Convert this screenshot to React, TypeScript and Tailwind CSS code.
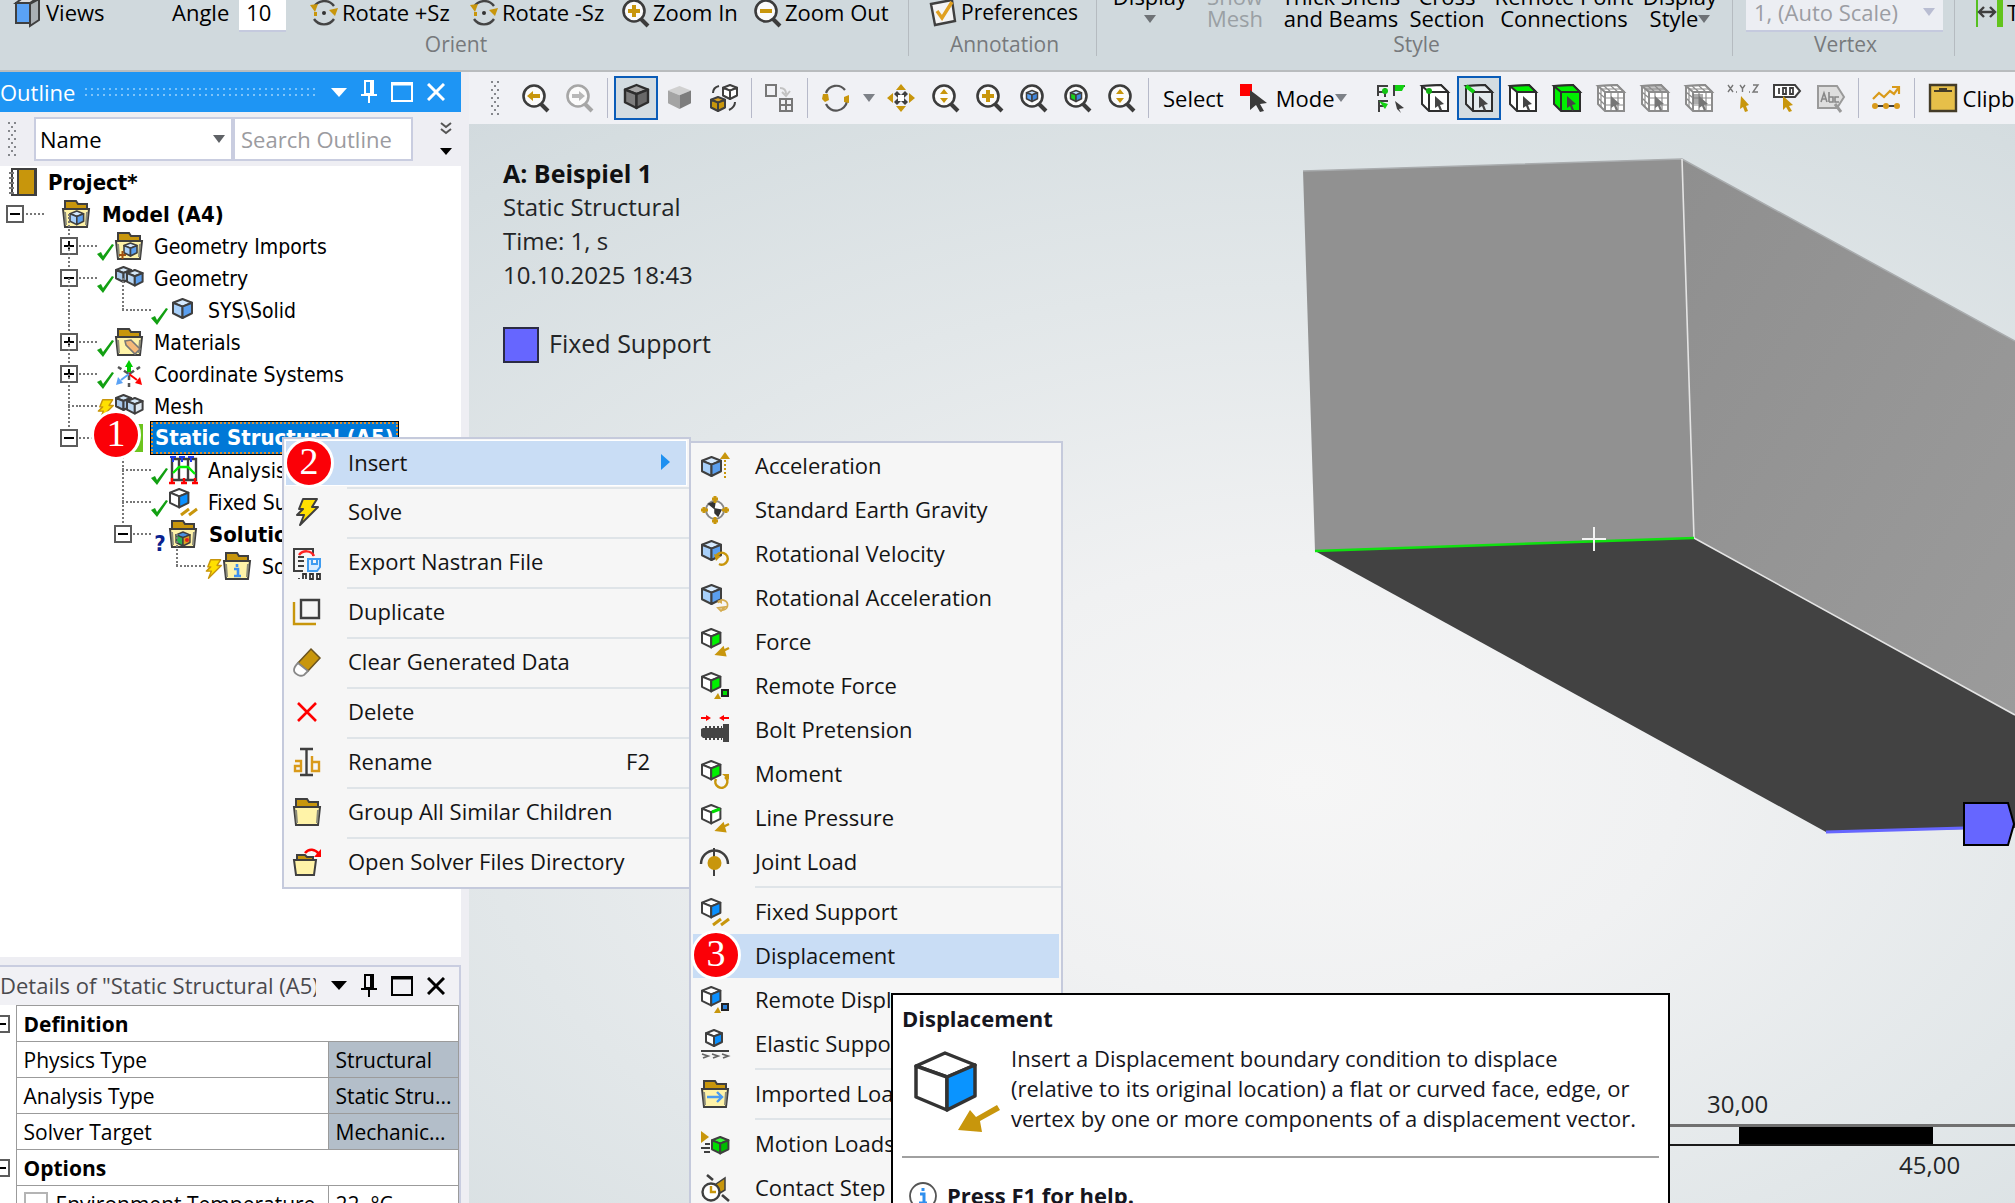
import React from 'react';

const UI = "font-['Open_Sans','Noto_Sans',sans-serif]";
const TREE = "font-['DejaVu_Sans_Condensed','DejaVu_Sans',sans-serif]";
const INK = '#3f3f3f';
const GOLD = '#c8960c';

type Kids = { children?: React.ReactNode };

function Icon({ children, size = 'size-7', box = 28 }: Kids & { size?: string; box?: number }) {
  return (
    <svg aria-hidden="true" viewBox={`0 0 ${box} ${box}`} className={`${size} shrink-0 overflow-visible`} fill="none">
      {children}
    </svg>
  );
}

function Cube({ x = 0, y = 0, s = 1, left = '#fff', right = '#fff', top = '#fff', stroke = INK, w = 2 }: {
  x?: number; y?: number; s?: number; left?: string; right?: string; top?: string; stroke?: string; w?: number;
}) {
  return (
    <g transform={`translate(${x} ${y}) scale(${s})`} stroke={stroke} strokeWidth={w / s} strokeLinejoin="round">
      <path d="M10 0 20 4 10 8 0 4Z" fill={top} />
      <path d="M0 4 10 8V20L0 15Z" fill={left} />
      <path d="M20 4 10 8V20L20 15Z" fill={right} />
    </g>
  );
}

function Folder({ children }: Kids) {
  return (
    <Icon>
      <path d="M3 10V1h11l2 3h9v6" fill="#c8960c" stroke={INK} strokeWidth="2" />
      <path d="M1 9h26l-2 18H3Z" fill="#fff3a8" stroke={INK} strokeWidth="2" />
      <path d="M3 12l1 13M25 12l-1 13" stroke="#8a8a7a" strokeWidth="2" />
      {children}
    </Icon>
  );
}

function Lens({ children, pale = false }: Kids & { pale?: boolean }) {
  const c = pale ? '#a6a6a6' : '#3c3c3c';
  return (
    <Icon>
      <circle cx="13" cy="12" r="10.5" stroke={c} strokeWidth="2.6" fill="#fbfbfb" />
      <path d="M20 20l7 7" stroke={c} strokeWidth="4" />
      {children}
    </Icon>
  );
}

function Bolt({ gold = false }: { gold?: boolean }) {
  return (
    <path d="M10 1h14l-5 8h6L7 27l4-10H4l6-6H6Z" fill="#ffe000" stroke={gold ? '#c8960c' : INK} strokeWidth="2" strokeLinejoin="round" />
  );
}

function Spin() {
  return (
    <Icon>
      <path d="M4 9A11 11 0 0 1 23 6M25 17A11 11 0 0 1 4 20" stroke="#555" strokeWidth="2.2" />
      <path d="M1 10h5l1 6-4 2-3-3ZM27 11l-5 2v5l5 1Z" fill={GOLD} />
    </Icon>
  );
}

const Rotate = () => (
  <Icon>
    <path d="M4 8A12 12 0 0 1 24 7M24 20A12 12 0 0 1 4 20" stroke="#444" strokeWidth="2.4" />
    <path d="M0 6l8-1-3 8ZM28 9l-9 2 6 6ZM4 13h3v4H4Z" fill={GOLD} />
    <circle cx="14" cy="14" r="2" fill="#333" />
  </Icon>
);

const SmallArrow = () => <path d="M28 20 20 24M22 20l-6 6 8 1Z" stroke={GOLD} strokeWidth="2.4" fill={GOLD} />;
const Hatch = () => <path d="M12 27l8-6M20 27l8-6" stroke={GOLD} strokeWidth="3" />;
const UpDown = () => <path d="M13 5l4 5H9ZM13 19l4-5H9Z" fill={GOLD} />;
const Plus = () => <path d="M13 6v12M7 12h12" stroke={GOLD} strokeWidth="4" />;

function Caret({ className = '' }: { className?: string }) {
  return (
    <svg aria-hidden="true" viewBox="0 0 12 8" className={`h-2 w-3 shrink-0 ${className}`}>
      <path d="M0 0h12L6 8Z" fill="currentColor" />
    </svg>
  );
}

/* ------------------------------------------------------------ Ribbon */

function RibbonGroup({ label, children, className = '' }: Kids & { label: string; className?: string }) {
  return (
    <section className={`flex h-14 shrink-0 flex-col justify-end border-r border-[#b5bbc0] ${className}`}>
      <div className="flex items-end">{children}</div>
      <div className="h-6 pl-1 text-center text-[21px] leading-6 text-[#77797c]">{label}</div>
    </section>
  );
}

function RibbonButton({ icon, label, className = '' }: { icon: React.ReactNode; label: string; className?: string }) {
  return (
    <button type="button" className={`flex h-9 items-center gap-1 pb-[3px] whitespace-nowrap ${className}`}>
      {icon}
      {label}
    </button>
  );
}

function Stacked({ top, bottom, className = '', caret = false }: { top: string; bottom?: string; className?: string; caret?: boolean }) {
  return (
    <button type="button" className={`flex shrink-0 flex-col items-center pb-px whitespace-nowrap leading-[22px] ${className}`}>
      <span>{top}</span>
      <span className="flex h-6 items-start">
        {bottom}
        {caret && <Caret className="mt-2 text-[#6e7276]" />}
      </span>
    </button>
  );
}

function Ribbon() {
  return (
    <header className="flex h-[72px] shrink-0 items-start overflow-hidden border-b-2 border-[#b9bcbe] bg-[#d0d9dd] text-[22px] text-black">
      <RibbonGroup label="Orient" className="w-[909px]">
        <RibbonButton
          className="ml-[14px] w-[158px]"
          label="Views"
          icon={
            <Icon>
              <path d="M2 4h14v20H2Z" fill="#5aa2f5" stroke={INK} strokeWidth="2" />
              <path d="M16 5l9-5v21l-9 6Z" fill="#aab0b4" stroke={INK} strokeWidth="2" />
              <path d="M2 4l8-6h15l-9 6Z" fill="#ddd" stroke={INK} strokeWidth="2" />
            </Icon>
          }
        />
        <label className="flex h-9 w-[138px] items-center gap-[10px]">
          <span className="pb-[3px]">Angle</span>
          <input defaultValue="10" className="h-9 w-[47px] border-b-2 border-[#c5cade] bg-white px-[7px] pb-[2px]" />
        </label>
        <RibbonButton className="w-40" label="Rotate +Sz" icon={<Rotate />} />
        <RibbonButton className="w-[151px]" label="Rotate -Sz" icon={<Rotate />} />
        <RibbonButton className="w-[132px]" label="Zoom In" icon={<Lens><Plus /></Lens>} />
        <RibbonButton label="Zoom Out" icon={<Lens><path d="M7 12h12" stroke={GOLD} strokeWidth="4" /></Lens>} />
      </RibbonGroup>
      <RibbonGroup label="Annotation" className="w-[188px]">
        <RibbonButton
          className="ml-[20px] text-[21px]"
          label="Preferences"
          icon={
            <Icon>
              <path d="M2 5l21-4 3 21L6 26Z" fill="#f4f4f4" stroke={INK} strokeWidth="2.4" />
              <path d="M8 12l5 7L23 3" stroke="#e0a020" strokeWidth="3.4" />
            </Icon>
          }
        />
      </RibbonGroup>
      <RibbonGroup label="Style" className="w-[636px]">
        <Stacked top="Display" caret className="ml-[11px] w-[84px]" />
        <Stacked top="Show" bottom="Mesh" className="w-[86px] text-[#9aa0a4]" />
        <Stacked top="Thick Shells" bottom="and Beams" className="w-[126px]" />
        <Stacked top="Cross" bottom="Section" className="w-[86px]" />
        <Stacked top="Remote Point" bottom="Connections" className="w-[148px]" />
        <Stacked top="Display" bottom="Style" caret className="w-[84px]" />
      </RibbonGroup>
      <RibbonGroup label="Vertex" className="w-[222px]">
        <select aria-label="Vertex scale" className="ml-[13px] h-9 w-[197px] appearance-none border-b-2 border-[#c5cade] bg-[#eceef3] pb-[2px] pl-2 text-[#9b9da3]">
          <option>1, (Auto Scale)</option>
        </select>
        <Caret className="mb-4 -ml-5 text-[#b9bdd2]" />
      </RibbonGroup>
      <RibbonButton
        className="-mt-1 ml-5"
        label="Thicken"
        icon={
          <Icon>
            <path d="M2 0v28" stroke="#55c020" strokeWidth="2" />
            <path d="M25 0v28" stroke="#62c41c" strokeWidth="6" />
            <path d="M5 13h14M9 8l-5 5 5 5M15 8l5 5-5 5" stroke={INK} strokeWidth="2.4" />
          </Icon>
        }
      />
    </header>
  );
}

/* ------------------------------------------------------------ Graphics toolbar */

function Tool({ children, active = false, label }: Kids & { active?: boolean; label: string }) {
  return (
    <button
      type="button"
      aria-label={label}
      className={`flex h-11 w-11 shrink-0 items-center justify-center ${active ? 'border-2 border-[#0a5cb8] bg-[#d3dce1]' : ''}`}
    >
      {children}
    </button>
  );
}

const Rule = ({ className = '' }: { className?: string }) => <span className={`h-10 w-px shrink-0 bg-[#b6b9c9] ${className}`} />;

function Grip({ className = '' }: { className?: string }) {
  return (
    <svg aria-hidden="true" viewBox="0 0 8 36" className={`h-9 w-2 shrink-0 ${className}`}>
      {[1, 9, 17, 25, 33].map((y) => (
        <g key={y} fill="#85878c">
          <path d={`M0 ${y}h2v2H0ZM6 ${y}h2v2H6Z`} />
          {y < 33 && <path d={`M3 ${y + 4}h2v2H3Z`} />}
        </g>
      ))}
    </svg>
  );
}

function PickBox({ top = '#fff', body = '#fff', mark, grey = false, mesh = false }: {
  top?: string; body?: string; mark?: React.ReactNode; grey?: boolean; mesh?: boolean;
}) {
  const c = grey ? '#8c8c8c' : '#2e2e2e';
  return (
    <Icon>
      <path d="M1 2 20 1 27 8V27H8L1 20Z" fill={body} stroke={c} strokeWidth="2" />
      <path d="M1 2 20 1 27 8H8Z" fill={top} stroke={c} strokeWidth="2" />
      <path d="M8 8V27" stroke={c} strokeWidth="2" />
      {mesh && <path d="M7 2l7 6v19M14 2l7 6v19M4 5h20M8 14h19M8 21h19M4 5v18M1 8l7 6M1 14l7 7" stroke={c} strokeWidth="1.2" />}
      {mark}
      <path d="M14 12l9 8-4 1 2 5-2 1-2-5-3 2Z" fill={grey ? '#777' : '#444'} />
    </Icon>
  );
}

const LIME = '#00f000';

function GraphicsToolbar() {
  return (
    <div role="toolbar" className="flex h-[52px] shrink-0 items-center overflow-hidden bg-[#f0f1f5] pl-[22px] text-[22px] whitespace-nowrap">
      <Grip className="mr-[14px]" />
      <Tool label="Previous view"><Lens><path d="M6 12l6-5v3h7v4h-7v3Z" fill={GOLD} /></Lens></Tool>
      <Tool label="Next view"><Lens pale><path d="M20 12l-6-5v3H7v4h7v3Z" fill="#b8b8b8" /></Lens></Tool>
      <Rule className="mx-[6px]" />
      <Tool active label="Shaded exterior and edges">
        <Icon><Cube x={3} y={1} s={1.15} left="#7e7e7e" right="#686868" top="#a8a8a8" w={2.4} stroke="#2e2e2e" /></Icon>
      </Tool>
      <Tool label="Shaded exterior">
        <Icon><Cube x={2} y={2} s={1.15} left="#a4a4a4" right="#7d7d7d" top="#d0d0d0" w={0} stroke="none" /></Icon>
      </Tool>
      <Tool label="Swap view">
        <Icon>
          <Cube x={13} y={1} s={0.7} />
          <Cube x={1} y={13} s={0.7} left={GOLD} right={GOLD} top="#d8a020" />
          <path d="M3 9c0-4 2-6 6-7M25 18c0 4-2 6-6 8" stroke={INK} strokeWidth="2" />
        </Icon>
      </Tool>
      <Rule className="mx-[5px]" />
      <Tool label="Viewports">
        <Icon>
          <path d="M1 1h10v11H1Z M15 15h12v12H15Z M21 15v12M15 21h12" stroke="#777" strokeWidth="2" />
          <path d="M15 4c4 0 6 2 6 6M17 8l4 4 4-5" stroke="#c2c2c2" strokeWidth="2" />
        </Icon>
      </Tool>
      <Rule className="mx-[6px]" />
      <Tool label="Rotate"><Spin /></Tool>
      <Caret className="mr-1 ml-[5px] text-[#7d8187]" />
      <Tool label="Pan">
        <Icon>
          <path d="M14 0l5 6H9ZM14 28l5-6H9ZM0 14l6-5v10ZM28 14l-6-5v10Z" fill={GOLD} />
          <path d="M7 10l3-3 4 4 4-4 3 3-4 4 4 4-3 3-4-4-4 4-3-3 4-4Z" fill={INK} />
          <path d="M11 11h6v6h-6Z" fill="#fff" />
        </Icon>
      </Tool>
      <Tool label="Zoom"><Lens><UpDown /></Lens></Tool>
      <Tool label="Box zoom"><Lens><Plus /></Lens></Tool>
      <Tool label="Zoom to fit"><Lens><Cube x={7.5} y={6.5} s={0.55} left="#5aa2f5" right="#3f86dd" top="#bcdcff" w={1.5} /></Lens></Tool>
      <Tool label="Zoom to selection"><Lens><Cube x={7.5} y={6.5} s={0.55} left="#19d219" right="#3f86dd" top="#bcdcff" w={1.5} /></Lens></Tool>
      <Tool label="Look at"><Lens><UpDown /></Lens></Tool>
      <Rule className="mx-[5px]" />
      <span className="ml-[9px]">Select</span>
      <button type="button" className="ml-4 flex items-center gap-2">
        <Icon>
          <path d="M0 0h12v12H0Z" fill="#f00" />
          <path d="M10 6l17 13-7 1 4 7-4 1-4-7-6 5Z" fill="#3a3a3a" />
        </Icon>
        Mode
        <Caret className="-ml-2 text-[#7d8187]" />
      </button>
      <span className="w-[22px] shrink-0" />
      <Tool label="Smart select">
        <Icon>
          <path d="M1 12V2h10M2 28V17h9M17 12V2h11M8 4v9M1 8h6M1 22h6" stroke={INK} strokeWidth="2" />
          <circle cx="8" cy="7" r="3" fill="#12c412" />
          <path d="M18 1h10l-3 6h-7ZM2 17l9 3-3 5Z" fill="#12d012" />
          <path d="M18 17l9 7-5 1 2 4-4-4Z" fill={INK} />
        </Icon>
      </Tool>
      <Tool label="Vertex"><PickBox mark={<circle cx="8" cy="7" r="3" fill="#10b010" />} /></Tool>
      <Tool active label="Edge"><PickBox body="#e4ebee" top="#e4ebee" mark={<path d="M1 2l8 6" stroke="#10d010" strokeWidth="4" />} /></Tool>
      <Tool label="Face"><PickBox top={LIME} /></Tool>
      <Tool label="Body"><PickBox top={LIME} body={LIME} /></Tool>
      <Tool label="Node"><PickBox grey mesh /></Tool>
      <Tool label="Element face"><PickBox grey mesh top="#c4c4c4" /></Tool>
      <Tool label="Element"><PickBox grey mesh mark={<path d="M8 10h10v10H8Z" fill="#777" opacity="0.6" />} /></Tool>
      <Tool label="Coordinates">
        <Icon>
          <path d="M-1 1l5 7M4 1l-5 7M11 1l2.500 3.500L16 1M13.500 4v4M24 1h5l-5 7h5M7 8h1M20 8h1" stroke="#777" strokeWidth="1.4" />
          <path d="M12 12l8 9-3 1 2 5-3 1-2-5-3 2Z" fill={GOLD} />
        </Icon>
      </Tool>
      <Tool label="Tag">
        <Icon>
          <path d="M1 1h21l5 6-5 6H1Z" fill="#fff" stroke={INK} strokeWidth="2" />
          <path d="M6 4v6M10 4h3v6h-3ZM17 4h3v6h-3Z" stroke={INK} strokeWidth="1.8" />
          <path d="M10 12l10 9-4 1 3 5-3 1-3-5-3 3Z" fill={GOLD} />
        </Icon>
      </Tool>
      <Tool label="Label">
        <Icon>
          <path d="M1 2h19l7 11-7 11H1Z" fill="#dedede" stroke="#9a9a9a" strokeWidth="2" />
          <path d="M4 18l3-9 3 9M5 15h4M12 8v10M12 13h4v5h-4M22 13h-4v5h4" stroke="#888" strokeWidth="1.6" />
          <path d="M18 20l6 8" stroke="#999" strokeWidth="3" />
        </Icon>
      </Tool>
      <Rule className="mx-[5px]" />
      <Tool label="Chart">
        <Icon>
          <path d="M1 15l6-6 5 4 6-6 4 3 5-7M20 3h7v7" stroke="#d99a1a" strokeWidth="2.2" />
          <path d="M2 22h24" stroke={INK} strokeWidth="2" />
          <circle cx="3" cy="22" r="3" fill="#d99a1a" />
          <circle cx="14" cy="22" r="3" fill="#d99a1a" />
          <circle cx="25" cy="22" r="3" fill="#d99a1a" />
        </Icon>
      </Tool>
      <Rule className="mx-[6px]" />
      <button type="button" className="ml-2 flex items-center gap-[6px]">
        <Icon>
          <path d="M1 1h26v26H1Z" fill="#e6bf49" stroke="#443c28" strokeWidth="2.400" />
          <path d="M5 7h18M10 5h8" stroke="#443c28" strokeWidth="2" />
        </Icon>
        Clipboard
      </button>
    </div>
  );
}

/* ------------------------------------------------------------ Outline */

function PaneButtons() {
  return (
    <span className="ml-auto flex shrink-0 items-center gap-[14px] pr-4">
      <button type="button" aria-label="Pane menu">
        <svg aria-hidden="true" viewBox="0 0 16 9" className="h-[9px] w-4"><path d="M0 0h16L8 9Z" fill="currentColor" /></svg>
      </button>
      <button type="button" aria-label="Pin">
        <svg aria-hidden="true" viewBox="0 0 16 24" className="h-6 w-4" fill="none" stroke="currentColor" strokeWidth="2"><path d="M4 1h8v13H4ZM0 15h16M8 15v8M10 2v12" /></svg>
      </button>
      <button type="button" aria-label="Maximize">
        <svg aria-hidden="true" viewBox="0 0 22 20" className="h-5 w-[22px]" fill="none" stroke="currentColor"><path d="M1 1h20v18H1Z" strokeWidth="2" /><path d="M0 2h22" strokeWidth="3" /></svg>
      </button>
      <button type="button" aria-label="Close">
        <svg aria-hidden="true" viewBox="0 0 18 18" className="size-[18px]" fill="none" stroke="currentColor" strokeWidth="3"><path d="M1 1l16 16M17 1L1 17" /></svg>
      </button>
    </span>
  );
}

function Expander({ open }: { open: boolean }) {
  return (
    <svg aria-hidden="true" viewBox="0 0 18 18" className="size-[18px] shrink-0" fill="none">
      <path d="M1 1h16v16H1Z" stroke="#5c5c5c" strokeWidth="2" fill="#fff" />
      <path d={open ? 'M4 9h10' : 'M4 9h10M9 4v10'} stroke="#000" strokeWidth="2" />
    </svg>
  );
}

const Check = () => (
  <svg aria-hidden="true" viewBox="0 0 18 18" className="mt-[14px] h-[18px] w-[18px] shrink-0"><path d="M0 10l4-2 2 4L15 0l2 1L6 17Z" fill="#12a012" /></svg>
);
const MiniBolt = () => (
  <svg aria-hidden="true" viewBox="2 0 24 28" className="mt-2 h-[22px] w-[17px] shrink-0"><Bolt gold /></svg>
);
const Query = () => <span className="mt-4 w-[18px] text-center text-[22px] leading-5 font-bold text-[#0a1f8f]">?</span>;

const blueCube = { left: '#a8d0fa', right: '#5b9fee', top: '#d5eaff' };

const GeometryIcon = ({ right = '#5b9fee' }: { right?: string }) => (
  <Icon>
    <Cube x={1} y={3} s={0.75} left="#a8c8ea" right="#a8c8ea" top="#d5e8f8" />
    <Cube x={12} y={6} s={0.78} left="#bcd8f2" right={right} top="#d5e8f8" />
  </Icon>
);

type Row = {
  text: string; level: number; bold?: boolean; open?: boolean; leaf?: boolean; status?: React.ReactNode; icon: React.ReactNode; selected?: boolean;
};

const rows: Row[] = [
  {
    text: 'Project*', level: 0, bold: true, leaf: true,
    icon: (
      <Icon>
        <path d="M4 1h24v26H4Z" fill="#fff" stroke={INK} strokeWidth="2" />
        <path d="M10 1h17v26H10Z" fill="#c8960c" stroke={INK} strokeWidth="2" />
        <path d="M1 5h5M1 10h5M1 15h5M1 20h5M1 25h5" stroke="#777" strokeWidth="2" />
      </Icon>
    ),
  },
  { text: 'Model (A4)', level: 1, bold: true, open: true, icon: <Folder><Cube x={8} y={11} s={0.68} {...blueCube} w={1.6} /></Folder> },
  {
    text: 'Geometry Imports', level: 2, open: false, status: <Check />,
    icon: <Folder><Cube x={9} y={11} s={0.65} {...blueCube} w={1.6} /><path d="M4 23h7M7.500 19v8" stroke="#a05010" strokeWidth="2" /></Folder>,
  },
  { text: 'Geometry', level: 2, open: true, status: <Check />, icon: <GeometryIcon /> },
  { text: 'SYS\\Solid', level: 3, leaf: true, status: <Check />, icon: <Icon><Cube x={4} y={3} s={0.95} {...blueCube} /></Icon> },
  {
    text: 'Materials', level: 2, open: false, status: <Check />,
    icon: <Folder><path d="M10 13l6-1 9 9-5 5-9-9Z" fill="#f5b878" stroke="#777" strokeWidth="1.6" /></Folder>,
  },
  {
    text: 'Coordinate Systems', level: 2, open: false, status: <Check />,
    icon: (
      <Icon>
        <path d="M14 14v13M14 14L3 7M14 14l11-7" stroke="#555" strokeWidth="2.500" strokeDasharray="6 3" />
        <path d="M14 0l4 7h-8Z" fill="#0c0" /><path d="M14 7v5" stroke="#0c0" strokeWidth="4" />
        <path d="M14 14l8 6" stroke="#f00" strokeWidth="2" /><path d="M27 25l-2-8-5 6Z" fill="#f00" />
        <path d="M14 14l-8 6" stroke="#5aa2f5" strokeWidth="2" /><path d="M1 25l2-8 5 6Z" fill="#5aa2f5" />
      </Icon>
    ),
  },
  { text: 'Mesh', level: 2, leaf: true, status: <MiniBolt />, icon: <GeometryIcon right="#dfe9f2" /> },
  {
    text: 'Static Structural (A5)', level: 2, bold: true, open: true, selected: true, status: <Check />,
    icon: <Icon><path d="M0 0h28v28H0Z" fill="#6cc41e" /></Icon>,
  },
  {
    text: 'Analysis Settings', level: 3, leaf: true, status: <Check />,
    icon: (
      <Icon>
        <path d="M3 3h24v21H3ZM10 3v21M19 3v21" stroke={INK} strokeWidth="2.400" />
        <path d="M1 1h6M10 1h6M19 1h6M4 1v5M13 1v5M22 1v5" stroke="#1c3cf0" strokeWidth="2" />
        <path d="M4 17l6-6h9l7 7" stroke="#0e0" strokeWidth="2.400" />
        <path d="M0 27h6M12 27h6M23 27h6M3 22v5M15 22v5M26 22v5" stroke="#f00" strokeWidth="2.400" />
      </Icon>
    ),
  },
  { text: 'Fixed Support', level: 3, leaf: true, status: <Check />, icon: <Icon><Cube x={1} y={1} s={0.92} right="#0a90ff" /><Hatch /></Icon> },
  {
    text: 'Solution (A6)', level: 3, bold: true, open: true, status: <Query />,
    icon: <Folder><Cube x={7} y={12} s={0.7} left="#30b050" right="#e0a020" top="#4a90e0" w={1.4} /><circle cx="18" cy="20" r="2" fill="#e02020" /></Folder>,
  },
  {
    text: 'Solution Information', level: 4, leaf: true, status: <MiniBolt />,
    icon: <Folder><path d="M14 12v3M11 17h4v7M11 24h7" stroke="#3f90f0" strokeWidth="2.600" /></Folder>,
  },
];

const indent = ['pl-2', 'pl-[6px]', 'pl-[60px]', 'pl-[114px]', 'pl-[168px]'];
const vline = ['', 'left-[14px]', 'left-[68px]', 'left-[122px]', 'left-[176px]'];

function OutlineTree() {
  return (
    <ul role="tree" className={`h-[791px] overflow-hidden bg-white text-[21px] text-black ${TREE}`}>
      {rows.map((r, i) => (
        <li
          key={r.text}
          role="treeitem"
          aria-selected={!!r.selected}
          className={`relative flex h-8 items-center whitespace-nowrap ${indent[r.level]}`}
        >
          {r.level > 1 && (
            <span className={`absolute top-[-16px] h-8 border-l-2 border-dotted border-[#777] ${vline[r.level]}`} />
          )}
          {i === 5 && <span className="absolute top-[-48px] left-[68px] h-12 border-l-2 border-dotted border-[#777]" />}
          {r.level > 0 && (r.leaf
            ? <span className="ml-2 w-[10px] border-t-2 border-dotted border-[#777]" />
            : <span className="relative"><Expander open={!!r.open} /></span>)}
          {r.level > 0 && <span className={`border-t-2 border-dotted border-[#777] ${r.level === 1 ? 'mr-[18px] ml-[2px] w-[18px]' : 'ml-px w-[18px]'}`} />}
          {r.status && <span className="flex h-8 w-[18px] items-start">{r.status}</span>}
          {r.icon}
          <span
            className={
              r.selected
                ? 'ml-2 border-2 border-dotted border-[#e09030] bg-[#0078d7] px-[2px] text-[22px] leading-7 font-bold text-white outline-1 outline-black'
                : r.bold
                  ? 'ml-3 text-[22px] font-bold'
                  : 'ml-[11px] pt-[3px]'
            }
          >
            {r.text}
          </span>
        </li>
      ))}
    </ul>
  );
}

function OutlinePane() {
  return (
    <section aria-label="Outline">
      <h2 className="flex h-10 items-center bg-[#1e95f4] text-[22px] text-white">
        Outline
        <span className="ml-2 h-3 w-[234px] bg-[radial-gradient(#7cc3f9_1px,transparent_1px)] bg-[size:6px_6px]" />
        <PaneButtons />
      </h2>
      <div className="flex h-[54px] items-center bg-[#eeeef3] pl-2 text-[22px]">
        <Grip className="mr-[18px]" />
        <span className="relative">
          <select aria-label="Filter by" className="h-11 w-[199px] appearance-none border-2 border-[#c9cde0] bg-white pl-1 text-black">
            <option>Name</option>
          </select>
          <Caret className="absolute top-[18px] right-2 text-[#5f6266]" />
        </span>
        <input aria-label="Search Outline" placeholder="Search Outline" className="h-11 w-[180px] border-2 border-[#c9cde0] bg-white pl-[6px] placeholder:text-[#9b9ba0]" />
        <button type="button" aria-label="More" className="ml-[26px] text-black">
          <svg aria-hidden="true" viewBox="0 0 14 34" className="h-[34px] w-[14px]" fill="none">
            <path d="M2 1l5 4 5-4M2 7l5 4 5-4" stroke="#555" strokeWidth="2" />
            <path d="M1 26h12L7 33Z" fill="#000" />
          </svg>
        </button>
      </div>
      <OutlineTree />
    </section>
  );
}

/* ------------------------------------------------------------ Details */

function GroupRow({ title }: { title: string }) {
  return (
    <tr className="h-9">
      <td className="w-4 align-middle"><span className="-ml-2 block"><Expander open /></span></td>
      <th colSpan={2} className="border border-[#9b9b9b] bg-white px-[7px] text-left font-bold">{title}</th>
    </tr>
  );
}

function ValueRow({ name, value }: { name: string; value: string }) {
  return (
    <tr className="h-9">
      <td className="w-4" />
      <td className="w-[312px] border border-[#9b9b9b] bg-white px-[7px]">{name}</td>
      <td className="border border-[#9b9b9b] bg-[#b3bec9] px-[7px]">{value}</td>
    </tr>
  );
}

function DetailsPane() {
  return (
    <section aria-label="Details" className="mt-2 h-[300px] border-t-2 border-r-2 border-[#c9cde0] bg-[#f1f1f5]">
      <h2 className="flex h-[38px] items-center pb-px text-[22px] text-[#4a4a4e]">
        <span className="w-[316px] overflow-hidden whitespace-nowrap">Details of &quot;Static Structural (A5)&quot;</span>
        <span className="-mr-[2px] ml-auto flex text-black"><PaneButtons /></span>
      </h2>
      <table className="w-full table-fixed border-collapse bg-white text-[21px] leading-8 whitespace-nowrap text-black">
        <colgroup><col className="w-4" /><col className="w-[312px]" /><col /></colgroup>
        <tbody>
          <GroupRow title="Definition" />
          <ValueRow name="Physics Type" value="Structural" />
          <ValueRow name="Analysis Type" value="Static Stru..." />
          <ValueRow name="Solver Target" value="Mechanic..." />
          <GroupRow title="Options" />
          <tr className="h-9">
            <td />
            <td className="border border-[#9b9b9b] px-[7px]">
              <label className="flex items-center gap-2">
                <input type="checkbox" className="size-6 appearance-none border-2 border-[#b4b4b4] bg-white" />
                Environment Temperature
              </label>
            </td>
            <td className="border border-[#9b9b9b] px-[7px]">22, °C</td>
          </tr>
        </tbody>
      </table>
    </section>
  );
}

/* ------------------------------------------------------------ Viewport */

function Viewport() {
  return (
    <main className="relative flex-1 overflow-hidden bg-[#cfd7dc] bg-[radial-gradient(ellipse_1500px_900px_at_54%_61%,#f6f6f6_0%,#f0f1f2_25%,#e2e7e9_55%,#d5dde0_85%,#cfd7dc_100%)]">
      <svg aria-hidden="true" viewBox="0 0 1546 1079" preserveAspectRatio="xMidYMin slice" className="absolute inset-0 size-full" fill="none">
        <defs>
          <linearGradient id="side" x1="0" y1="0" x2="1" y2="1">
            <stop offset="0" stopColor="#8f8f8f" />
            <stop offset="1" stopColor="#9b9b9b" />
          </linearGradient>
        </defs>
        <path d="M834 47 1213 35 1225 414 846 427Z" fill="#919191" />
        <path d="M1213 35 1546 217V591L1225 414Z" fill="url(#side)" />
        <path d="M846 427 1225 414 1546 591V704L1357 708Z" fill="#424242" />
        <path d="M834 47 1213 35 1546 217" stroke="#a9acae" strokeWidth="1.500" />
        <path d="M1213 35 1225 414 1546 591" stroke="#e4e4e4" strokeWidth="1.600" />
        <path d="M846 427 1225 414" stroke="#10e010" strokeWidth="2.500" />
        <path d="M1357 708 1495 704" stroke="#6666ff" strokeWidth="3" />
        <path d="M1495 679h44l6 21-6 21h-44Z" fill="#6666ff" stroke="#000" strokeWidth="2" />
        <path d="M1125 403v24M1113 415h24" stroke="#f2f2f2" strokeWidth="2" />
      </svg>
      <div className="relative px-[34px] pt-8 text-[24px] leading-[34px] text-[#232527]">
        <h1 className="text-[25px] leading-[34px] font-bold text-[#101112]">A: Beispiel 1</h1>
        <p>Static Structural</p>
        <p>Time: 1, s</p>
        <p>10.10.2025 18:43</p>
        <p className="mt-[34px] flex items-center gap-[10px] text-[25px]">
          <span className="size-9 border-2 border-[#2b2b44] bg-[#6666ff]" />
          <span className="pb-[3px]">Fixed Support</span>
        </p>
      </div>
      <div className="absolute inset-x-0 bottom-[22px] text-[24px] leading-8 text-[#232527]">
        <p className="ml-[1238px]">30,00</p>
        <div className="mt-1 ml-[440px] h-[22px] border-t-3 border-b-2 border-t-[#707070] border-b-[#1a1a1a]">
          <div className="ml-[830px] h-full w-[194px] bg-black" />
        </div>
        <p className="mt-[3px] ml-[1430px]">45,00</p>
      </div>
    </main>
  );
}

/* ------------------------------------------------------------ Menus */

const menuIcons: Record<string, React.ReactNode> = {
  Solve: <Icon><Bolt /></Icon>,
  Export: (
    <Icon>
      <path d="M20 8V1H1v22h9M5 9h6M5 13h6M5 18h6" stroke={INK} strokeWidth="2" />
      <path d="M6 7c4-5 12-5 15 1" stroke="#f22" strokeWidth="2.500" />
      <path d="M15 11h12v8l-3 4h-9Z M19 11v5h5v-5" fill="#d8ecff" stroke="#3f9cf0" strokeWidth="2" />
      <path d="M6 30v1M10 31v-5h3v5M17 26h3v5h-3ZM24 26h3v5h-3Z" stroke="#333" strokeWidth="1.800" />
    </Icon>
  ),
  Duplicate: <Icon><path d="M1 4v22h22" stroke={GOLD} strokeWidth="2.400" /><path d="M8 2h18v18H8Z" stroke={INK} strokeWidth="2.400" /></Icon>,
  Clear: (
    <Icon>
      <path d="M18 1l9 9-12 13-10-8Z" fill={GOLD} stroke="#6b5420" strokeWidth="1.500" />
      <path d="M5 15l10 8-4 4c-2 1-4 1-6 0s-4-3-4-5 1-4 4-7Z" fill="#fff" stroke="#888" strokeWidth="1.800" />
    </Icon>
  ),
  Delete: <Icon><path d="M5 5l18 18M23 5L5 23" stroke="#f00" strokeWidth="2.600" /></Icon>,
  Rename: (
    <Icon>
      <path d="M7 1h13M7 27h13M13.500 1v26" stroke={INK} strokeWidth="2.400" />
      <path d="M2 13h6v10H2v-5h6M19 8v15h7v-9h-7" stroke="#d99a1a" strokeWidth="2.400" />
    </Icon>
  ),
  Group: <Folder />,
  Open: (
    <Icon>
      <path d="M4 12V7h8l2 2h6v3" fill={GOLD} stroke={INK} strokeWidth="2" />
      <path d="M1 12h22l-2 15H3Z" fill="#fff3a8" stroke={INK} strokeWidth="2" />
      <path d="M12 5c4-5 10-4 14 1" stroke="#f00" strokeWidth="2.600" /><path d="M28 1v8h-7Z" fill="#f00" />
    </Icon>
  ),
};

const contextItems: [string, string, string?][] = [
  ['Solve', 'Solve'],
  ['Export', 'Export Nastran File'],
  ['Duplicate', 'Duplicate'],
  ['Clear', 'Clear Generated Data'],
  ['Delete', 'Delete'],
  ['Rename', 'Rename', 'F2'],
  ['Group', 'Group All Similar Children'],
  ['Open', 'Open Solver Files Directory'],
];

function ContextMenu() {
  return (
    <div role="menu" className="absolute top-[437px] left-[282px] w-[409px] border-2 border-[#c5cadc] bg-[#f6f6f6] text-[22px] text-[#141414]">
      <button type="button" role="menuitem" className="m-px flex h-[46px] w-[402px] items-center border border-white bg-[#c9ddf5] pr-4 pb-[2px] pl-[62px]">
        Insert
        <svg aria-hidden="true" viewBox="0 0 9 16" className="ml-auto h-4 w-[9px]"><path d="M0 0l9 8-9 8Z" fill="#1e90f0" /></svg>
      </button>
      {contextItems.map(([key, label, hint]) => (
        <div key={key}>
          <div className="ml-[63px] h-[2px] bg-[#dfe4e8]" />
          <button type="button" role="menuitem" className="flex h-12 w-full items-center pr-[39px] pb-[3px] pl-[9px]">
            {menuIcons[key]}
            <span className="ml-[27px]">{label}</span>
            {hint && <span className="ml-auto">{hint}</span>}
          </button>
        </div>
      ))}
    </div>
  );
}

const greenCube = <Cube x={1} y={1} s={0.92} right={LIME} />;
const whiteBlue = <Cube x={1} y={1} s={0.92} right="#0a90ff" />;

const insertItems: [string, React.ReactNode, boolean?][] = [
  ['Acceleration', <Icon><Cube x={1} y={5} s={0.95} {...blueCube} /><path d="M24 8v20" stroke={GOLD} strokeWidth="2" strokeDasharray="2 2" /><path d="M24 0l5 7H19Z" fill={GOLD} /></Icon>],
  ['Standard Earth Gravity', <Icon><circle cx="14" cy="14" r="9" fill="#fff" stroke="#888" strokeWidth="2" /><path d="M8 8l6-2-1 6ZM14 13l6 1-3 6-3-3Z" fill="#333" stroke="#333" strokeWidth="1.500" /><path d="M14 0v7M14 21v7M0 14h7M21 14h7M11 3h6M11 25h6M3 11v6M25 11v6" stroke={GOLD} strokeWidth="3" /></Icon>],
  ['Rotational Velocity', <Icon><Cube x={1} y={1} s={0.95} {...blueCube} /><path d="M15 17a6 6 0 1 1 3 7" stroke={GOLD} strokeWidth="2.400" /><path d="M13 14l7 2-5 5Z" fill={GOLD} /></Icon>],
  ['Rotational Acceleration', <Icon><Cube x={1} y={1} s={0.95} {...blueCube} /><path d="M17 19a5 5 0 1 1 4 7M17 24l7-1-4 4Z" stroke="#d4ac50" strokeWidth="1.800" /><path d="M16 17l5-2v5Z" fill="#d4ac50" /></Icon>],
  ['Force', <Icon>{greenCube}<SmallArrow /></Icon>],
  ['Remote Force', <Icon>{greenCube}<path d="M21 18h6v6h-6Z" fill="#0d0" stroke="#222" strokeWidth="2" /><path d="M13 27l4-6 3 6Z" fill={GOLD} /></Icon>],
  ['Bolt Pretension', <Icon><path d="M0 2h8M28 2h-8" stroke="#f00" strokeWidth="2" /><path d="M10 2l-5-3v6ZM18 2l5-3v6Z" fill="#f00" /><path d="M0 13l2-1h20V8h6v18h-6v-4H2l-2-2Z" fill="#444" /><path d="M4 11h17M4 23h17" stroke="#444" strokeWidth="2" strokeDasharray="2 2" /></Icon>],
  ['Moment', <Icon>{greenCube}<path d="M15 19a6 6 0 1 0 9-2" stroke={GOLD} strokeWidth="2.600" /><path d="M21 14h7v6Z" fill={GOLD} /></Icon>],
  ['Line Pressure', <Icon><Cube x={1} y={1} s={0.92} /><path d="M11 8l8-3" stroke="#0d0" strokeWidth="3" /><SmallArrow /></Icon>],
  ['Joint Load', <Icon><path d="M13 0v28" stroke={INK} strokeWidth="2" /><path d="M0 16a13 13 0 0 1 27 0" stroke={INK} strokeWidth="2.400" /><circle cx="13.500" cy="15" r="7" fill={GOLD} /></Icon>],
  ['Fixed Support', <Icon>{whiteBlue}<Hatch /></Icon>, true],
  ['Displacement', <Icon>{whiteBlue}<SmallArrow /></Icon>],
  ['Remote Displacement', <Icon>{whiteBlue}<path d="M21 18h6v6h-6Z" fill="#2a7fd8" stroke="#222" strokeWidth="2" /><path d="M13 27l4-6 3 6Z" fill={GOLD} /></Icon>],
  ['Elastic Support', <Icon><Cube x={5} y={0} s={0.8} right="#0a90ff" /><path d="M0 21h28" stroke={INK} strokeWidth="2" /><path d="M1 24l6 2-5 2M11 24l6 2-5 2M21 24l6 2-5 2" stroke="#666" strokeWidth="1.800" /></Icon>],
  ['Imported Load', <Folder><path d="M6 17h14M16 12l5 5-5 5" stroke="#4a9af0" strokeWidth="2.400" /></Folder>, true],
  ['Motion Loads...', <Icon><path d="M0 1l8 6-8 6Z" fill={GOLD} /><path d="M4 14h5M0 18h9M3 22h6" stroke={INK} strokeWidth="2" /><Cube x={11} y={7} s={0.82} left="#0d0" right="#0b0" top="#3f3" /></Icon>, true],
  ['Contact Step Control', <Icon><path d="M12 12L24 4v12l-5 3Z" fill={GOLD} stroke={INK} strokeWidth="1.500" /><circle cx="10" cy="18" r="8.500" fill="#fff" stroke={INK} strokeWidth="2.400" /><path d="M10 12v6h5" stroke={GOLD} strokeWidth="2.400" /><path d="M6 1l6 5M28 27l-7-6" stroke={INK} strokeWidth="2.600" /></Icon>],
];

function InsertMenu() {
  return (
    <div role="menu" className="absolute top-[441px] left-[689px] h-[762px] w-[374px] overflow-hidden border-2 border-b-0 border-[#c5cadc] bg-[#f6f6f6] pt-px text-[22px] text-[#141414]">
      {insertItems.map(([label, icon, ruled]) => (
        <div key={label}>
          {ruled && <div className="mt-[2px] mb-[2px] ml-16 h-[2px] bg-[#dfe4e8]" />}
          <button
            type="button"
            role="menuitem"
            className={`mx-[2px] flex h-11 w-[366px] items-center pb-px pl-2 whitespace-nowrap ${label === 'Displacement' ? 'bg-[#c9ddf5]' : ''}`}
          >
            {icon}
            <span className="ml-[26px]">{label}</span>
          </button>
        </div>
      ))}
    </div>
  );
}

function HelpTip() {
  return (
    <aside role="tooltip" className="absolute top-[993px] left-[891px] h-[210px] w-[779px] border-2 border-b-0 border-black bg-white px-[9px] pt-[7px] text-[22px] text-[#16161e]">
      <h3 className="leading-8 font-bold">Displacement</h3>
      <div className="mt-[9px] flex">
        <svg aria-hidden="true" viewBox="0 0 90 86" className="mt-[6px] h-[86px] w-[90px] shrink-0 overflow-visible" fill="none">
          <g stroke="#333" strokeWidth="3.500" strokeLinejoin="round">
            <path d="M14 17 43 4 73 16 45 28Z" fill="#fff" />
            <path d="M14 17 45 28V61L14 48Z" fill="#fff" />
            <path d="M45 28 73 16V47L45 61Z" fill="#0a94ff" />
          </g>
          <path d="M95 56l3 5-20 11 2 11-24-2 12-20 6 7Z" fill={GOLD} />
        </svg>
        <p className="ml-[19px] leading-[30px] whitespace-nowrap">
          Insert a Displacement boundary condition to displace<br />
          (relative to its original location) a flat or curved face, edge, or<br />
          vertex by one or more components of a displacement vector.
        </p>
      </div>
      <hr className="mt-[21px] border-t-2 border-[#a0a0a0]" />
      <div className="mt-[21px] flex items-center gap-[10px] pl-[7px] font-bold">
        <Icon>
          <circle cx="14" cy="14" r="13" fill="#fff" stroke="#555" strokeWidth="1.800" />
          <path d="M14 6v3M11 12h4v9M10 21h8" stroke="#2f8fee" strokeWidth="3" />
        </Icon>
        Press F1 for help.
      </div>
    </aside>
  );
}

function Step({ n, className }: { n: number; className: string }) {
  return (
    <span className={`absolute flex size-[50px] items-center justify-center rounded-full border-3 border-white bg-[#fb0007] pb-1 font-['Liberation_Serif',serif] text-[38px] leading-none text-white ${className}`}>
      {n}
    </span>
  );
}

export default function App() {
  return (
    <div className={`relative flex h-screen flex-col overflow-hidden bg-[#eeeef3] ${UI}`}>
      <Ribbon />
      <div className="flex min-h-0 flex-1">
        <div className="mr-2 w-[461px] shrink-0 overflow-hidden">
          <OutlinePane />
          <DetailsPane />
        </div>
        <div className="flex min-w-0 flex-1 flex-col">
          <GraphicsToolbar />
          <Viewport />
        </div>
      </div>
      <ContextMenu />
      <InsertMenu />
      <HelpTip />
      <Step n={1} className="top-[410px] left-[91px]" />
      <Step n={2} className="top-[438px] left-[284px]" />
      <Step n={3} className="top-[930px] left-[691px]" />
    </div>
  );
}
